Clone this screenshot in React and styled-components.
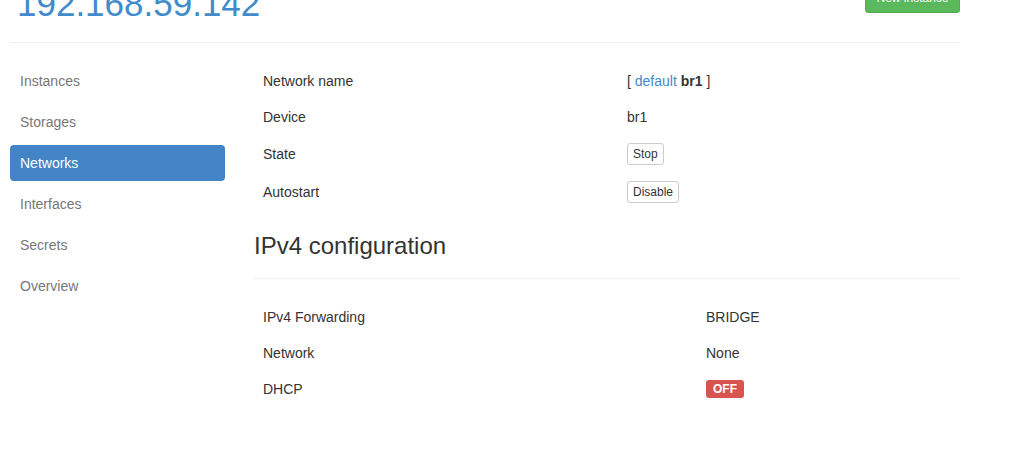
import React from "react";
import styled, { createGlobalStyle } from "styled-components";

const GlobalStyle = createGlobalStyle`
  html, body {
    margin: 0;
    padding: 0;
    background: #fff;
    overflow: hidden;
  }
  body {
    font-family: "Liberation Sans", Arial, sans-serif;
    font-size: 14px;
    line-height: 20px;
    color: #333;
  }
`;

const Page = styled.div`
  width: 950px;
  padding-left: 10px;
`;

const Header = styled.div`
  display: flex;
  justify-content: space-between;
  align-items: flex-start;
  padding-bottom: 18px;
  border-bottom: 1px solid #eee;
`;

const Title = styled.h1`
  margin: -16px 0 0 7px;
  font-size: 35px;
  line-height: 40px;
  font-weight: 400;
  color: #428bca;
`;

const Button = styled.button`
  font-family: inherit;
  display: inline-block;
  cursor: pointer;
  border-radius: 3px;
  border: 1px solid ${(p) => (p.$variant === "success" ? "#4cae4c" : "#ccc")};
  background: ${(p) => (p.$variant === "success" ? "#5cb85c" : "#fff")};
  color: ${(p) => (p.$variant === "success" ? "#fff" : "#333")};
  font-size: 12px;
  padding: ${(p) => (p.$size === "xs" ? "1px 5px" : "5px 10px")};
  line-height: 18px;
  vertical-align: middle;
`;

const NewButton = styled(Button)`
  margin-top: -17px;
  width: 95px;
  padding: 5px 0;
`;

const Body = styled.div`
  display: flex;
  gap: 30px;
  margin-top: 20px;
`;

const Nav = styled.ul`
  list-style: none;
  margin: 0;
  padding: 0;
  width: 215px;
  flex-shrink: 0;
  display: flex;
  flex-direction: column;
  gap: 5px;
`;

const NavItem = styled.li`
  padding: 8px 10px;
  line-height: 20px;
  border-radius: 4px;
  color: ${(p) => (p.$active ? "#fff" : "#777")};
  background: ${(p) => (p.$active ? "#4284c6" : "transparent")};
`;

const Content = styled.div`
  flex: 1;
`;

const Table = styled.div`
  display: grid;
  grid-template-columns: ${(p) => p.$col}px 1fr;
`;

const Cell = styled.div`
  padding: 8px;
  line-height: 20px;
  display: flex;
  align-items: center;
  min-height: 20px;
`;

const Link = styled.a`
  color: #428bca;
  text-decoration: none;
`;

const Heading = styled.h3`
  margin: 22px 0 0 -1px;
  font-size: 24px;
  line-height: 26px;
  font-weight: 400;
  padding-bottom: 19px;
  border-bottom: 1px solid #eee;
  margin-bottom: 20px;
`;

const Label = styled.span`
  display: inline-block;
  background: #d9534f;
  color: #fff;
  font-weight: 700;
  font-size: 12px;
  line-height: 12px;
  padding: 3px 7px 3px;
  border-radius: 3px;
`;

const navItems = ["Instances", "Storages", "Networks", "Interfaces", "Secrets", "Overview"];

export default function App() {
  return (
    <Page>
      <GlobalStyle />
      <Header>
        <Title>192.168.59.142</Title>
        <NewButton $variant="success">New instance</NewButton>
      </Header>
      <Body>
        <Nav>
          {navItems.map((n) => (
            <NavItem key={n} $active={n === "Networks"}>
              {n}
            </NavItem>
          ))}
        </Nav>
        <Content>
          <Table $col={364}>
            <Cell>Network name</Cell>
            <Cell>
              [&nbsp;<Link href="#">default</Link>&nbsp;<b>br1</b>&nbsp;]
            </Cell>
            <Cell>Device</Cell>
            <Cell>br1</Cell>
            <Cell>State</Cell>
            <Cell>
              <Button $size="xs">Stop</Button>
            </Cell>
            <Cell>Autostart</Cell>
            <Cell>
              <Button $size="xs">Disable</Button>
            </Cell>
          </Table>
          <Heading>IPv4 configuration</Heading>
          <Table $col={443}>
            <Cell>IPv4 Forwarding</Cell>
            <Cell>BRIDGE</Cell>
            <Cell>Network</Cell>
            <Cell>None</Cell>
            <Cell>DHCP</Cell>
            <Cell>
              <Label>OFF</Label>
            </Cell>
          </Table>
        </Content>
      </Body>
    </Page>
  );
}
